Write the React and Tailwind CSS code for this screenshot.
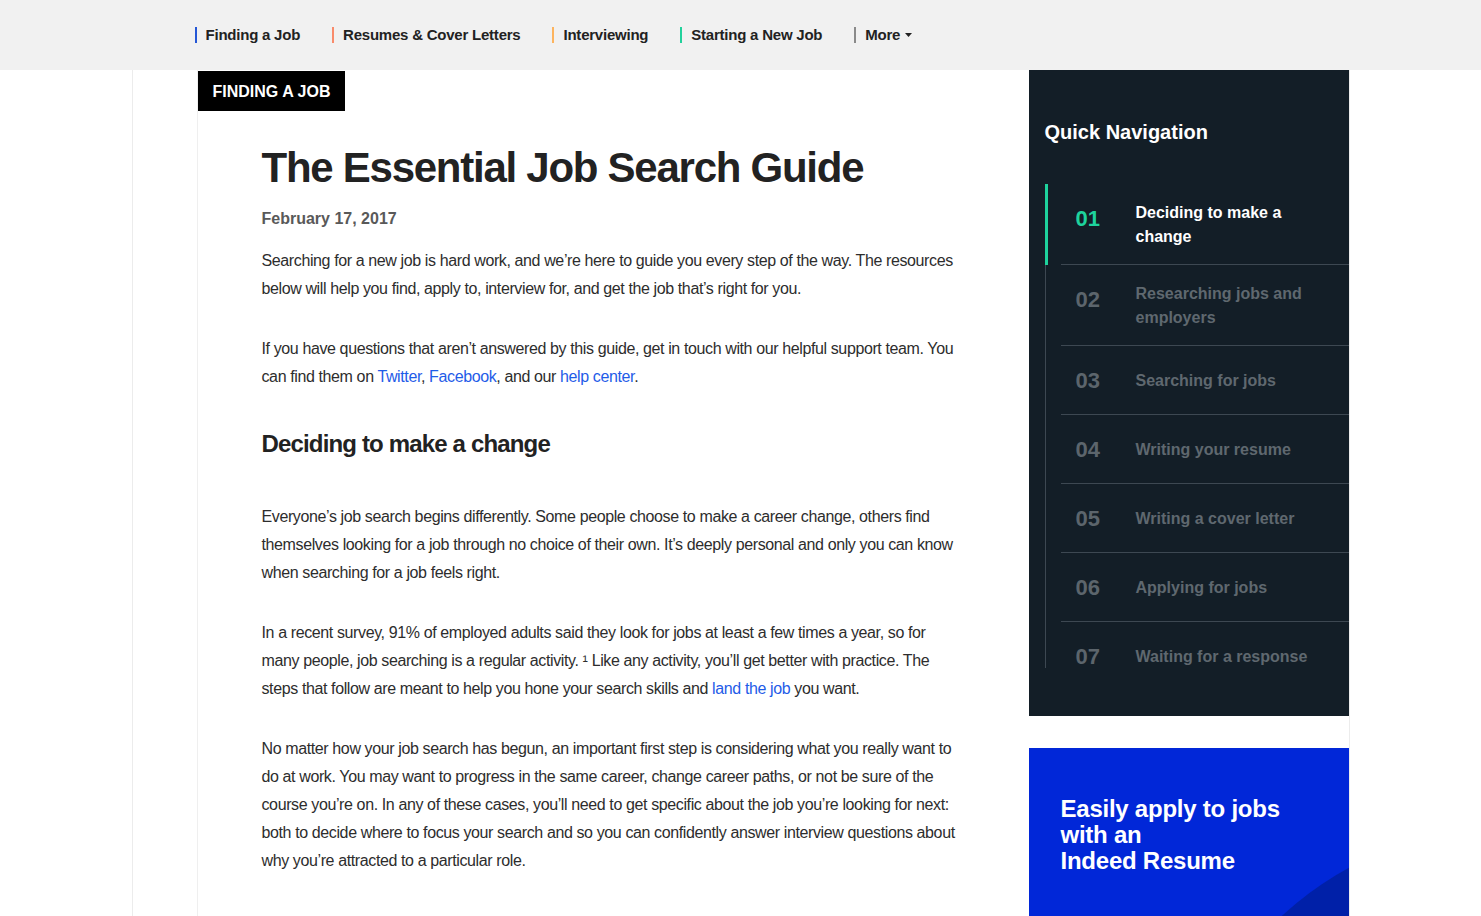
import React from 'react';

const navItems = [
  { label: 'Finding a Job', color: 'border-[#2557d6]' },
  { label: 'Resumes & Cover Letters', color: 'border-[#f98b6b]' },
  { label: 'Interviewing', color: 'border-[#fdb45e]' },
  { label: 'Starting a New Job', color: 'border-[#22d19c]' },
];

const steps = [
  'Deciding to make a change',
  'Researching jobs and employers',
  'Searching for jobs',
  'Writing your resume',
  'Writing a cover letter',
  'Applying for jobs',
  'Waiting for a response',
];

function A({ children }) {
  return <a href="#" className="text-[#1f5ce8]">{children}</a>;
}

function TopNav() {
  return (
    <nav className="bg-[#f1f1f1] h-[70px]">
      <div className="mx-auto w-[1218px] pl-[63px] h-full flex items-center">
        {navItems.map((item) => (
          <a
            key={item.label}
            href="#"
            className={`border-l-2 ${item.color} pl-[9px] mr-8 leading-[16px] text-[15px] font-bold text-[#222] tracking-[-0.015em]`}
          >
            {item.label}
          </a>
        ))}
        <a href="#" className="border-l-2 border-[#8a8a8a] pl-[9px] leading-[16px] text-[15px] font-bold text-[#222] tracking-[-0.015em] flex items-center gap-[5px]">
          More
          <svg width="7" height="4" viewBox="0 0 7 4"><path d="M0 0h7L3.5 4z" fill="#222" /></svg>
        </a>
      </div>
    </nav>
  );
}

function QuickNav() {
  return (
    <div className="bg-[#131e27] pt-12 pb-12">
      <h3 className="pl-4 text-[20px] leading-[28px] font-bold text-white">Quick Navigation</h3>
      <ul className="mt-[38px] ml-4 border-l border-[#3d4852]">
        {steps.map((s, i) => {
          const active = i === 0;
          const last = i === steps.length - 1;
          return (
            <li key={s} className={`relative pl-[15px] ${last ? 'h-[46px]' : ''}`}>
              {active && <span className="absolute -left-px top-0 bottom-0 w-[3px] bg-[#1ed39d]" />}
              <div className={`flex pl-[15px] pr-8 pt-[17px] pb-[15px] ${last ? '' : 'border-b border-[#3d4852]'}`}>
                <span className={`self-start w-[60px] shrink-0 text-[22px] leading-[36px] font-bold ${active ? 'text-[#1ed39d]' : 'text-[#5c656c]'}`}>
                  {String(i + 1).padStart(2, '0')}
                </span>
                <span className={`self-center text-[16px] leading-6 font-bold ${active ? 'text-white' : 'text-[#5f686f]'}`}>
                  {s}
                </span>
              </div>
            </li>
          );
        })}
      </ul>
    </div>
  );
}

function Promo() {
  return (
    <div className="relative overflow-hidden bg-[#0127d8] h-[300px] mt-8 pt-12 px-8">
      <div className="absolute left-[151px] top-[82px] w-[640px] h-[640px] rounded-full bg-[#0020a8]" />
      <p className="relative text-white font-bold text-[24px] leading-[26px] tracking-[-0.01em]">
        Easily apply to jobs with an
        <br />
        Indeed Resume
      </p>
    </div>
  );
}

export default function App() {
  return (
    <div className="h-screen overflow-hidden bg-white" style={{ fontFamily: '"Liberation Sans", Arial, Helvetica, sans-serif' }}>
      <TopNav />
      <div className="mx-auto w-[1218px] flex border-l border-[#ececec] min-h-[846px]">
        <div className="w-[64px] shrink-0" />
        <main className="w-[832px] shrink-0 border-l border-[#efefef]">
          <div className="inline-block mt-px h-[40px] pt-px bg-black text-white font-bold text-[16px] leading-[40px] px-[15px]">
            FINDING A JOB
          </div>
          <article className="px-16 pt-[32px] text-[#2d2d2d]">
            <h1 className="text-[42px] leading-[50px] font-bold tracking-[-0.03em] text-[#222]">
              The Essential Job Search Guide
            </h1>
            <p className="mt-[14px] text-[16px] leading-6 font-bold text-[#595959]">February 17, 2017</p>
            <div className="mt-4 text-[16px] leading-[28px] tracking-[-0.024em]">
              <p className="mb-8">
                Searching for a new job is hard work, and we’re here to guide you every step of the way. The resources below will help you find, apply to, interview for, and get the job that’s right for you.
              </p>
              <p className="mb-[37px]">
                If you have questions that aren’t answered by this guide, get in touch with our helpful support team. You can find them on <A>Twitter</A>, <A>Facebook</A>, and our <A>help center</A>.
              </p>
              <h2 className="text-[24px] leading-[32px] font-bold tracking-[-0.035em] text-[#222] mb-[43px]">
                Deciding to make a change
              </h2>
              <p className="mb-8">
                Everyone’s job search begins differently. Some people choose to make a career change, others find themselves looking for a job through no choice of their own. It’s deeply personal and only you can know when searching for a job feels right.
              </p>
              <p className="mb-8">
                In a recent survey, 91% of employed adults said they look for jobs at least a few times a year, so for many people, job searching is a regular activity. ¹ Like any activity, you’ll get better with practice. The steps that follow are meant to help you hone your search skills and <A>land the job</A> you want.
              </p>
              <p className="mb-8">
                No matter how your job search has begun, an important first step is considering what you really want to do at work. You may want to progress in the same career, change career paths, or not be sure of the course you’re on. In any of these cases, you’ll need to get specific about the job you’re looking for next: both to decide where to focus your search and so you can confidently answer interview questions about why you’re attracted to a particular role.
              </p>
            </div>
          </article>
        </main>
        <aside className="w-[321px] shrink-0 border-r border-[#ececec]">
          <QuickNav />
          <Promo />
        </aside>
      </div>
    </div>
  );
}
